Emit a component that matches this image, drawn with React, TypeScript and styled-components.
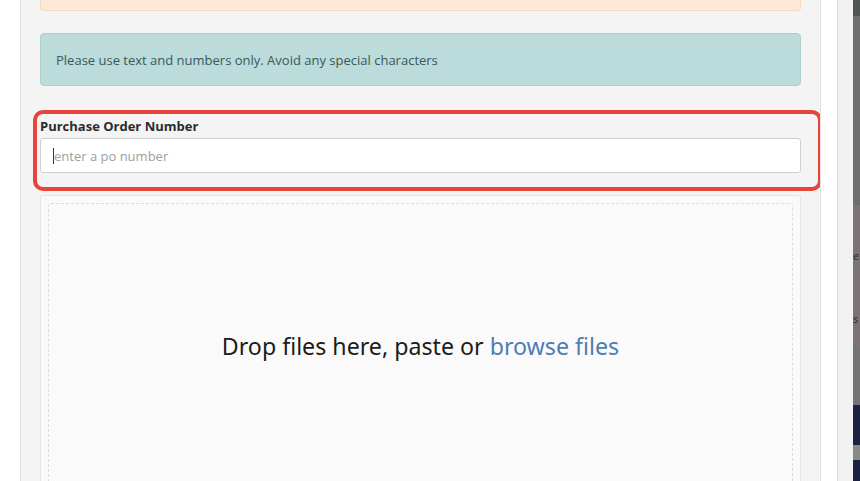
import * as React from 'react';
import styled, { createGlobalStyle } from 'styled-components';

const GlobalStyle = createGlobalStyle`
    html, body {
        margin: 0;
        padding: 0;
        height: 481px;
        overflow: hidden;
        background: #ffffff;
    }
`;

const Page = styled.div`
    display: flex;
    height: 481px;
    overflow: hidden;
    font-family: "Open Sans", "Noto Sans", sans-serif;
`;

const Gutter = styled.div`
    width: ${(props: GutterProps) => props.width}px;
    flex-shrink: 0;
    background: #ffffff;
`;

const Panel = styled.div`
    width: 761px;
    flex-shrink: 0;
    padding: 0 19px;
    background: #f4f4f4;
    border-left: 1px solid #e2e2e2;
    border-right: 1px solid #e2e2e2;
    display: flex;
    flex-direction: column;
    overflow: hidden;

    & > * {
        flex-shrink: 0;
    }
`;

const WarningTail = styled.div`
    height: 10px;
    background: #fde9d8;
    border: 1px solid #f6d9bf;
    border-top: none;
    border-radius: 0 0 4px 4px;
`;

const InfoBox = styled.div`
    margin-top: 22px;
    height: 51px;
    padding: 0 15px;
    display: flex;
    align-items: center;
    background: #bcdbdb;
    border: 1px solid #a9cfcf;
    border-radius: 4px;
    color: #3a5858;
    font-size: 13px;
`;

const Field = styled.div`
    position: relative;
    margin-top: 32px;
    display: flex;
    flex-direction: column;
`;

const Label = styled.label`
    font-size: 13px;
    font-weight: 700;
    line-height: 17px;
    color: #2b2b2b;
    margin-bottom: 3px;
`;

const Input = styled.div`
    height: 33px;
    display: flex;
    align-items: center;
    padding: 0 12px;
    background: #ffffff;
    border: 1px solid #cfcfcf;
    border-radius: 3px;
    font-size: 13px;
    color: #a0a0a0;
`;

const Caret = styled.span`
    display: inline-block;
    width: 1px;
    height: 16px;
    background: #333333;
`;

const Highlight = styled.div`
    position: absolute;
    top: -8px;
    bottom: -18px;
    left: -7px;
    right: -21px;
    border: 4px solid #e8443a;
    border-radius: 10px;
    pointer-events: none;
`;

const DropZone = styled.div`
    margin-top: 22px;
    height: 286px;
    padding: 7px;
    background: #fafafa;
    border: 1px solid #e5e5e5;
    border-radius: 3px;
    display: flex;
`;

const DropArea = styled.div`
    flex: 1;
    display: flex;
    align-items: center;
    justify-content: center;
    border: 1px dashed #dcdcdc;
    border-radius: 3px;
    font-family: "Noto Sans", "Open Sans", sans-serif;
    font-size: 23.2px;
    color: #1c1c1c;
`;

const Browse = styled.span`
    color: #4f7db3;
    cursor: pointer;
`;

const Divider = styled.div`
    width: 1px;
    flex-shrink: 0;
    background: #dedede;
`;

const SideRail = styled.div`
    width: 15px;
    flex-shrink: 0;
    background: #f2f2f2;
`;

const Backdrop = styled.div`
    width: 7px;
    flex-shrink: 0;
    display: flex;
    flex-direction: column;
    overflow: hidden;
`;

const Band = styled.div`
    height: ${(props: BandProps) => props.size}px;
    background: ${(props: BandProps) => props.color};
    flex-shrink: 0;
    overflow: hidden;
    display: flex;
    flex-direction: column;
    gap: 50px;
    padding-top: ${(props: BandProps) => (props.text ? 44 : 0)}px;
    box-sizing: border-box;
    font-size: 11px;
    line-height: 13px;
    color: #2a2a2a;
    white-space: nowrap;
`;

interface GutterProps {
    width: number;
}

interface BandProps {
    size: number;
    color: string;
    text?: string[];
}

const bands: BandProps[] = [
    { size: 16, color: '#4d5555' },
    { size: 189, color: '#6e6e6e' },
    { size: 143, color: '#7e7374', text: ['e', 's'] },
    { size: 57, color: '#747474' },
    { size: 40, color: '#1b2343' },
    { size: 15, color: '#898989' },
    { size: 21, color: '#1b2343' },
];

export default function App() {
    return (
        <>
            <GlobalStyle />
            <Page>
                <Gutter width={20} />
                <Panel>
                    <WarningTail />
                    <InfoBox>Please use text and numbers only. Avoid any special characters</InfoBox>
                    <Field>
                        <Label>Purchase Order Number</Label>
                        <Input>
                            <Caret />
                            enter a po number
                        </Input>
                        <Highlight />
                    </Field>
                    <DropZone>
                        <DropArea>
                            <span>
                                Drop files here, paste or <Browse>browse files</Browse>
                            </span>
                        </DropArea>
                    </DropZone>
                </Panel>
                <Gutter width={16} />
                <Divider />
                <SideRail />
                <Backdrop>
                    {bands.map((b, i) => (
                        <Band key={i} size={b.size} color={b.color} text={b.text}>
                            {b.text?.map((t, j) => <span key={j}>{t}</span>)}
                        </Band>
                    ))}
                </Backdrop>
            </Page>
        </>
    );
}
